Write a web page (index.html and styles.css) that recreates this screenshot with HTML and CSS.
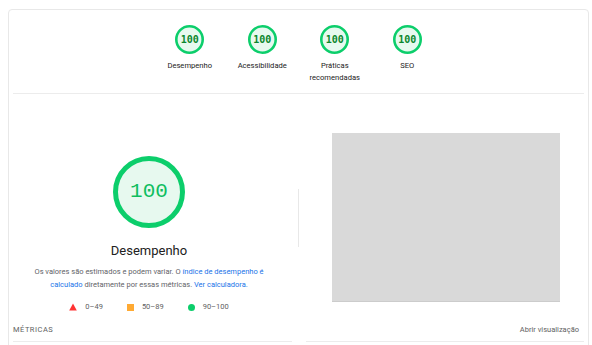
FILE: index.html
```html
<!DOCTYPE html>
<html lang="pt-BR">
<head>
<meta charset="utf-8">
<title>Lighthouse</title>
<link rel="stylesheet" href="styles.css">
</head>
<body>
<div class="card">
  <div class="topbar">
    <div class="gitem">
      <svg class="sgauge" viewBox="0 0 29 29" width="29" height="29"><circle cx="14.5" cy="14.5" r="13.2" class="gfill"/></svg>
      <span class="snum">100</span>
      <div class="glabel">Desempenho</div>
    </div>
    <div class="gitem">
      <svg class="sgauge" viewBox="0 0 29 29" width="29" height="29"><circle cx="14.5" cy="14.5" r="13.2" class="gfill"/></svg>
      <span class="snum">100</span>
      <div class="glabel">Acessibilidade</div>
    </div>
    <div class="gitem">
      <svg class="sgauge" viewBox="0 0 29 29" width="29" height="29"><circle cx="14.5" cy="14.5" r="13.2" class="gfill"/></svg>
      <span class="snum">100</span>
      <div class="glabel">Práticas recomendadas</div>
    </div>
    <div class="gitem">
      <svg class="sgauge" viewBox="0 0 29 29" width="29" height="29"><circle cx="14.5" cy="14.5" r="13.2" class="gfill"/></svg>
      <span class="snum">100</span>
      <div class="glabel">SEO</div>
    </div>
  </div>

  <div class="main">
    <div class="left">
      <div class="biggauge">
        <svg viewBox="0 0 72 72" width="72" height="72"><circle cx="36" cy="36" r="33.5" class="bfill"/></svg>
        <span class="bnum">100</span>
      </div>
      <div class="btitle">Desempenho</div>
      <p class="desc">Os valores são estimados e podem variar. O <a href="#">índice de desempenho é calculado</a> diretamente por essas métricas. <a href="#">Ver calculadora.</a></p>
      <div class="legend">
        <span class="lg"><svg class="lico" viewBox="0 0 8 8" width="8" height="8"><polygon points="4,0.5 7.8,7.5 0.2,7.5" fill="#ff3333"/></svg>0–49</span>
        <span class="lg"><span class="sq"></span>50–89</span>
        <span class="lg"><span class="dot"></span>90–100</span>
      </div>
    </div>
    <div class="vdiv"></div>
    <div class="right">
      <div class="shot"></div>
    </div>
  </div>

  <div class="mhead">
    <span class="mtitle">Métricas</span>
    <span class="mtoggle">Abrir visualização</span>
  </div>
  <div class="mgrid">
    <div class="mcell"></div>
    <div class="mcell"></div>
  </div>
</div>
</body>
</html>
```
FILE: styles.css
```css
* { box-sizing: border-box; }
html, body { margin: 0; padding: 0; background: #fff; }
body {
  font-family: Roboto, "Liberation Sans", Arial, sans-serif;
  color: #212121;
  overflow: hidden;
  height: 345px;
}
.card {
  margin: 9px 3px 0 8px;
  border: 1px solid #e8e8e8;
  border-radius: 4px;
  padding: 0 4px;
  height: 400px;
}
.topbar {
  display: flex;
  justify-content: center;
  align-items: flex-start;
  padding: 15px 0 9px;
  border-bottom: 1px solid #ececec;
}
.gitem {
  width: 72.5px;
  display: flex;
  flex-direction: column;
  align-items: center;
  position: relative;
}
.sgauge { display: block; }
.gfill { fill: #e7f9ef; stroke: #0cce6b; stroke-width: 2.6; }
.snum {
  position: absolute;
  top: 0;
  left: 0;
  right: 0;
  height: 29px;
  line-height: 29px;
  text-align: center;
  font-family: "DejaVu Sans Mono", "Liberation Mono", monospace;
  font-size: 10px;
  font-weight: bold;
  color: #0b862c;
}
.glabel {
  margin-top: 6px;
  font-size: 7.6px;
  line-height: 12px;
  text-align: center;
  color: #212121;
}
.main {
  display: grid;
  grid-template-columns: 1fr 1px 1fr;
  column-gap: 13px;
  align-items: start;
  padding-top: 39px;
}
.left {
  padding-top: 23px;
  display: flex;
  flex-direction: column;
  align-items: center;
}
.biggauge { position: relative; width: 72px; height: 72px; }
.biggauge svg { display: block; }
.bfill { fill: #e7f9ef; stroke: #0cce6b; stroke-width: 5; }
.bnum {
  position: absolute;
  inset: 0;
  line-height: 72px;
  text-align: center;
  font-family: "Liberation Mono", "DejaVu Sans Mono", monospace;
  font-size: 21px;
  color: #0fbe5f;
}
.btitle {
  margin-top: 14px;
  font-size: 13px;
  line-height: 18px;
  color: #212121;
}
.desc {
  margin: 5px 0 0;
  width: 240px;
  font-size: 7.5px;
  line-height: 13px;
  text-align: center;
  color: #5f6368;
}
.desc a { color: #1a73e8; text-decoration: none; }
.legend {
  margin-top: 10px;
  display: flex;
  gap: 24px;
  font-size: 7.5px;
  line-height: 12px;
  color: #616161;
}
.lg { display: flex; align-items: center; gap: 8px; }
.lico { display: block; }
.sq { width: 7px; height: 7px; background: #ffaa33; display: block; }
.dot { width: 7px; height: 7px; border-radius: 50%; background: #0cce6b; display: block; }
.vdiv {
  margin-top: 56px;
  height: 58px;
  background: #e8e8e8;
}
.right { display: flex; justify-content: center; padding-right: 4px; }
.shot {
  width: 228px;
  height: 169px;
  background: #d9d9d9;
  border-bottom: 1px solid #cccccc;
}
.mhead {
  margin-top: 9px;
  display: flex;
  justify-content: space-between;
  align-items: center;
  padding: 0 5px 0 0;
  height: 14px;
}
.mtitle {
  font-size: 7.5px;
  text-transform: uppercase;
  letter-spacing: 0.5px;
  color: #616161;
}
.mtoggle {
  font-size: 7.5px;
  color: #616161;
}
.mgrid {
  margin-top: 5px;
  display: grid;
  grid-template-columns: 1fr 1fr;
  column-gap: 14px;
}
.mcell { border-top: 1px solid #ececec; height: 10px; }
```
